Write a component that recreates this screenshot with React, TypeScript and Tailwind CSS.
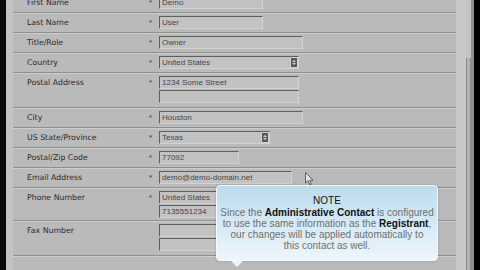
import React from "react"

type Field =
  | { kind: "input"; value: string; width: number }
  | { kind: "select"; value: string; width: number }

type Row = {
  label: string
  required: boolean
  height: number
  fields: Field[]
}

const rows: Row[] = [
  { label: "First Name", required: true, height: 20, fields: [{ kind: "input", value: "Demo", width: 104 }] },
  { label: "Last Name", required: true, height: 20, fields: [{ kind: "input", value: "User", width: 104 }] },
  { label: "Title/Role", required: true, height: 20, fields: [{ kind: "input", value: "Owner", width: 144 }] },
  { label: "Country", required: true, height: 20, fields: [{ kind: "select", value: "United States", width: 140 }] },
  {
    label: "Postal Address",
    required: true,
    height: 35,
    fields: [
      { kind: "input", value: "1234 Some Street", width: 140 },
      { kind: "input", value: "", width: 140 },
    ],
  },
  { label: "City", required: true, height: 20, fields: [{ kind: "input", value: "Houston", width: 144 }] },
  { label: "US State/Province", required: true, height: 20, fields: [{ kind: "select", value: "Texas", width: 111 }] },
  { label: "Postal/Zip Code", required: true, height: 20, fields: [{ kind: "input", value: "77092", width: 80 }] },
  { label: "Email Address", required: true, height: 20, fields: [{ kind: "input", value: "demo@demo-domain.net", width: 133 }] },
  {
    label: "Phone Number",
    required: true,
    height: 33,
    fields: [
      { kind: "select", value: "United States", width: 140 },
      { kind: "input", value: "7135551234", width: 61 },
    ],
  },
  {
    label: "Fax Number",
    required: false,
    height: 35,
    fields: [
      { kind: "input", value: "", width: 140 },
      { kind: "input", value: "", width: 140 },
    ],
  },
  { label: "", required: false, height: 30, fields: [] },
]

export default function App() {
  return (
    <div className="flex h-[270px] w-[480px] overflow-hidden bg-black font-['Liberation_Sans',Arial,sans-serif]">
      <div className="w-[6px] shrink-0 bg-[#0a0a0a]" />
      <div className="relative w-[450px] shrink-0 bg-[#bababa]">
        <div className="absolute left-0 top-0 h-full w-[7px] bg-[#c3c3c3]" />
        <div className="mt-[-7px] flex flex-col">
          {rows.map((row, i) => (
            <FormRow key={i} row={row} />
          ))}
        </div>

        <Cursor />
        <Note />
      </div>
      <Scrollbar />
    </div>
  )
}

function FormRow({ row }: { row: Row }) {
  return (
    <div
      className="flex border-b border-[#8f8f8f] shadow-[0_1px_0_#cdcdcd]"
      style={{ height: row.height }}
    >
      <div className="w-[140px] shrink-0 pl-[21px] pt-[5px] font-['DejaVu_Sans',sans-serif] text-[7.8px] leading-[10px] text-[#2a2a2a]">
        {row.label}
      </div>
      <div className="w-[9px] shrink-0 pt-[5px] text-center font-['DejaVu_Sans',sans-serif] text-[7px] leading-[10px] text-[#444]">
        {row.required ? "*" : ""}
      </div>
      <div className="flex flex-col gap-[1px] pl-[4px] pt-[3px]">
        {row.fields.map((f, j) =>
          f.kind === "input" ? (
            <TextBox key={j} value={f.value} width={f.width} />
          ) : (
            <SelectBox key={j} value={f.value} width={f.width} />
          ),
        )}
      </div>
    </div>
  )
}

function TextBox({ value, width }: { value: string; width: number }) {
  return (
    <div
      className="h-[13px] border border-t-[#5e5e5e] border-l-[#5e5e5e] border-b-[#d2d2d2] border-r-[#d2d2d2] bg-[#c2c2c2] pl-[2px] text-[8px] leading-[11px] text-[#474747]"
      style={{ width }}
    >
      {value}
    </div>
  )
}

function SelectBox({ value, width }: { value: string; width: number }) {
  return (
    <div
      className="flex h-[13px] items-center border border-t-[#5e5e5e] border-l-[#5e5e5e] border-b-[#d2d2d2] border-r-[#d2d2d2] bg-[#c2c2c2] text-[8px] leading-[11px] text-[#474747]"
      style={{ width }}
    >
      <span className="flex-1 pl-[2px]">{value}</span>
      <span className="flex h-[11px] w-[8px] flex-col items-center justify-center border border-[#d0d0d0] bg-[#5a5a5a]">
        <span className="h-0 w-0 border-x-[2px] border-b-[2px] border-x-transparent border-b-[#cfcfcf]" />
        <span className="mt-[1px] h-0 w-0 border-x-[2px] border-t-[2px] border-x-transparent border-t-[#cfcfcf]" />
      </span>
    </div>
  )
}

function Note() {
  return (
    <div className="absolute left-[210px] top-[185px] w-[222px]">
      <div className="h-[76px] rounded-[4px] border border-[#f4f9fc] bg-gradient-to-b from-[#bcdcee] to-[#eef6fa] pt-[9px] text-center text-[10px] leading-[11px] text-[#707070] shadow-[0_0_2px_rgba(0,0,0,0.25)]">
        <div className="mb-[1px] text-[#111]">NOTE</div>
        <div>
          Since the <b className="text-[#111]">Administrative Contact</b> is configured
        </div>
        <div>
          to use the same information as the <b className="text-[#111]">Registrant</b>,
        </div>
        <div>our changes will be applied automatically to</div>
        <div>this contact as well.</div>
      </div>
      <div className="ml-[15px] h-0 w-0 border-x-[6px] border-t-[6px] border-x-transparent border-t-[#eaf4f9]" />
    </div>
  )
}

function Cursor() {
  return (
    <svg
      className="absolute left-[299px] top-[172px]"
      width="9"
      height="14"
      viewBox="0 0 9 14"
    >
      <path
        d="M0.5 0.5 L0.5 11 L3 8.6 L4.8 12.8 L6.3 12.2 L4.6 8.2 L8 8.2 Z"
        fill="#e6e6e6"
        stroke="#444"
        strokeWidth="0.8"
      />
    </svg>
  )
}

function Scrollbar() {
  return (
    <div className="flex shrink-0">
      <div className="w-[10px] bg-[#c8c8c8]" />
      <div className="flex w-[5px] flex-col bg-[#c3c3c3]">
        <div className="h-[58px]" />
        <div className="flex-1 border-l border-r border-[#8c8c8c] bg-[#b4b4b4]" />
      </div>
      <div className="w-[3px] bg-[#8e8e8e]" />
      <div className="w-[6px] bg-black" />
    </div>
  )
}
